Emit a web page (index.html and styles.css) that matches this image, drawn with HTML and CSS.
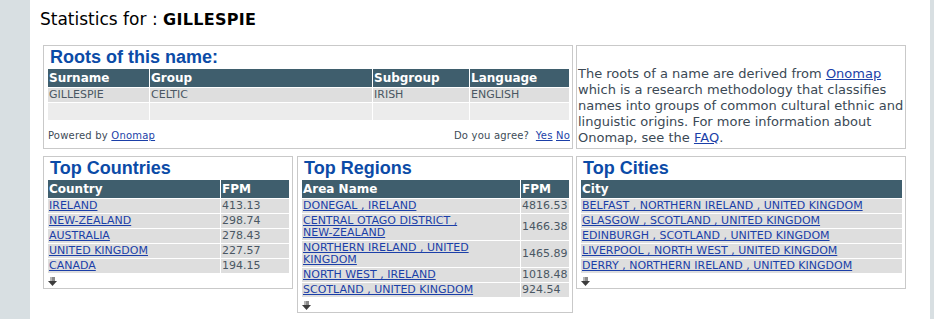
FILE: index.html
```html
<!DOCTYPE html>
<html>
<head>
<meta charset="utf-8">
<title>Statistics for GILLESPIE</title>
<link rel="stylesheet" href="styles.css">
</head>
<body>
<div class="page">
  <h1 class="title">Statistics for : <b>GILLESPIE</b></h1>
  <div class="grid">
    <div class="row">
      <section class="box roots">
        <h2>Roots of this name:</h2>
        <table class="data">
          <tr><th class="w-surname">Surname</th><th class="w-group">Group</th><th class="w-sub">Subgroup</th><th>Language</th></tr>
          <tr><td>GILLESPIE</td><td>CELTIC</td><td>IRISH</td><td>ENGLISH</td></tr>
          <tr class="empty"><td></td><td></td><td></td><td></td></tr>
        </table>
        <div class="foot">
          <span>Powered by <a href="#">Onomap</a></span>
          <span>Do you agree? &nbsp;<a href="#">Yes</a> <a href="#">No</a></span>
        </div>
      </section>
      <section class="box info">
        <p>The roots of a name are derived from <a href="#">Onomap</a> which is a research methodology that classifies names into groups of common cultural ethnic and linguistic origins. For more information about Onomap, see the <a href="#">FAQ</a>.</p>
      </section>
    </div>
    <div class="row row-bottom">
      <section class="box countries">
        <h2>Top Countries</h2>
        <table class="data">
          <tr><th class="w-country">Country</th><th>FPM</th></tr>
          <tr><td><a href="#">IRELAND</a></td><td>413.13</td></tr>
          <tr><td><a href="#">NEW-ZEALAND</a></td><td>298.74</td></tr>
          <tr><td><a href="#">AUSTRALIA</a></td><td>278.43</td></tr>
          <tr><td><a href="#">UNITED KINGDOM</a></td><td>227.57</td></tr>
          <tr><td><a href="#">CANADA</a></td><td>194.15</td></tr>
        </table>
        <div class="more"><svg width="9" height="9" viewBox="0 0 9 9"><rect x="2" y="0" width="5" height="4" fill="#8a8a8a"/><rect x="2" y="0" width="2" height="4" fill="#b5b5b5"/><path d="M0 4h9l-4.5 5z" fill="#3c3c3c"/></svg></div>
      </section>
      <section class="box regions">
        <h2>Top Regions</h2>
        <table class="data">
          <tr><th>Area Name</th><th class="w-fpm">FPM</th></tr>
          <tr><td><a href="#">DONEGAL , IRELAND</a></td><td>4816.53</td></tr>
          <tr><td><a href="#">CENTRAL OTAGO DISTRICT , <span class="nw">NEW-ZEALAND</span></a></td><td>1466.38</td></tr>
          <tr><td><a href="#">NORTHERN IRELAND , UNITED KINGDOM</a></td><td>1465.89</td></tr>
          <tr><td><a href="#">NORTH WEST , IRELAND</a></td><td>1018.48</td></tr>
          <tr><td><a href="#">SCOTLAND , UNITED KINGDOM</a></td><td>924.54</td></tr>
        </table>
        <div class="more"><svg width="9" height="9" viewBox="0 0 9 9"><rect x="2" y="0" width="5" height="4" fill="#8a8a8a"/><rect x="2" y="0" width="2" height="4" fill="#b5b5b5"/><path d="M0 4h9l-4.5 5z" fill="#3c3c3c"/></svg></div>
      </section>
      <section class="box cities">
        <h2>Top Cities</h2>
        <table class="data">
          <tr><th>City</th></tr>
          <tr><td><a href="#">BELFAST , NORTHERN IRELAND , UNITED KINGDOM</a></td></tr>
          <tr><td><a href="#">GLASGOW , SCOTLAND , UNITED KINGDOM</a></td></tr>
          <tr><td><a href="#">EDINBURGH , SCOTLAND , UNITED KINGDOM</a></td></tr>
          <tr><td><a href="#">LIVERPOOL , NORTH WEST , UNITED KINGDOM</a></td></tr>
          <tr><td><a href="#">DERRY , NORTHERN IRELAND , UNITED KINGDOM</a></td></tr>
        </table>
        <div class="more"><svg width="9" height="9" viewBox="0 0 9 9"><rect x="2" y="0" width="5" height="4" fill="#8a8a8a"/><rect x="2" y="0" width="2" height="4" fill="#b5b5b5"/><path d="M0 4h9l-4.5 5z" fill="#3c3c3c"/></svg></div>
      </section>
    </div>
  </div>
</div>
</body>
</html>
```
FILE: styles.css
```css
body {
  margin: 0;
  background: #d8dfe2;
  font-family: "DejaVu Sans", Verdana, sans-serif;
}
.page {
  margin-left: 30px;
  width: 900px;
  min-height: 319px;
  background: #fff;
  padding-top: 9px;
  box-sizing: border-box;
}
.title {
  margin: 0 0 0 10px;
  font-size: 17px;
  font-weight: normal;
  line-height: 20px;
  color: #000;
}
.title b {
  font-size: 16px;
  letter-spacing: 0.3px;
}
.grid {
  margin: 15px 0 0 13px;
}
.row {
  display: flex;
  gap: 3px;
}
.row-bottom {
  margin-top: 7px;
  align-items: flex-start;
}
.box {
  border: 1px solid #c9c9c9;
  box-sizing: border-box;
  padding: 0 2px 0 3px;
}
.roots { width: 530px; }
.info { width: 330px; padding: 0; }
.countries { width: 250px; margin-right: 1px; }
.regions { width: 276px; }
.cities { width: 330px; }
h2 {
  margin: 0;
  padding-left: 3px;
  font: bold 18px/22px "Liberation Sans", Arial, sans-serif;
  color: #0b4ba7;
}
.data {
  width: 100%;
  border-collapse: separate;
  border-spacing: 1px;
  font-size: 11px;
}
.data th {
  background: #3f5e6d;
  color: #fff;
  font-weight: bold;
  font-size: 12px;
  line-height: 18px;
  text-align: left;
  padding: 0 1px;
}
.data td {
  background: #dedede;
  color: #4a5763;
  line-height: 12px;
  padding: 1px;
  vertical-align: middle;
}
.data .empty td {
  background: #ececec;
  height: 17px;
  padding: 0;
}
.nw { white-space: nowrap; }
.w-surname { width: 99px; }
.w-group { width: 220px; }
.w-sub { width: 94px; }
.w-country { width: 170px; }
.w-fpm { width: 46px; }
a {
  color: #1b3fa8;
  text-decoration: underline;
}
.foot {
  display: flex;
  justify-content: space-between;
  margin-top: 8px;
  padding: 0 0 5px 1px;
  font-size: 10px;
  line-height: 14px;
  color: #3d4b57;
  letter-spacing: 0.2px;
}
.info p {
  margin: 0;
  padding: 20px 0 0 1px;
  font-size: 13px;
  line-height: 16px;
  color: #3b4955;
}
.more {
  height: 11px;
  padding: 3px 0 0 1px;
  line-height: 0;
}
.more svg {
  display: block;
}
```
